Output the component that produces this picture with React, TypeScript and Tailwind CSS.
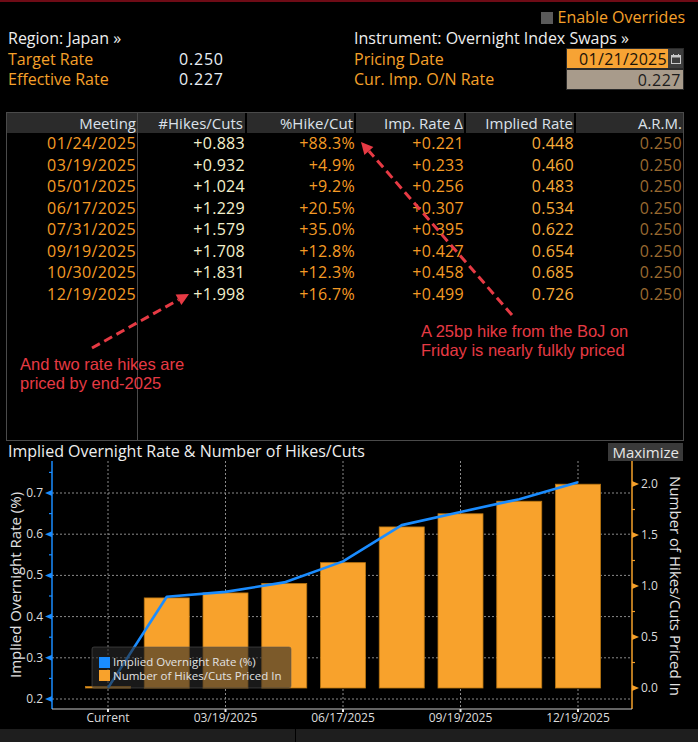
import React from 'react';

const rows = [
  { date: '01/24/2025', hikes: '+0.883', pct: '+88.3%', delta: '+0.221', implied: '0.448', arm: '0.250' },
  { date: '03/19/2025', hikes: '+0.932', pct: '+4.9%', delta: '+0.233', implied: '0.460', arm: '0.250' },
  { date: '05/01/2025', hikes: '+1.024', pct: '+9.2%', delta: '+0.256', implied: '0.483', arm: '0.250' },
  { date: '06/17/2025', hikes: '+1.229', pct: '+20.5%', delta: '+0.307', implied: '0.534', arm: '0.250' },
  { date: '07/31/2025', hikes: '+1.579', pct: '+35.0%', delta: '+0.395', implied: '0.622', arm: '0.250' },
  { date: '09/19/2025', hikes: '+1.708', pct: '+12.8%', delta: '+0.427', implied: '0.654', arm: '0.250' },
  { date: '10/30/2025', hikes: '+1.831', pct: '+12.3%', delta: '+0.458', implied: '0.685', arm: '0.250' },
  { date: '12/19/2025', hikes: '+1.998', pct: '+16.7%', delta: '+0.499', implied: '0.726', arm: '0.250' },
];

const hikes = [0, 0.883, 0.932, 1.024, 1.229, 1.579, 1.708, 1.831, 1.998];
const rates = [0.227, 0.448, 0.46, 0.483, 0.534, 0.622, 0.654, 0.685, 0.726];

const xs = (i: number) => 108 + i * 58.75;
const yL = (v: number) => 238 - (v - 0.2) * 412;
const yR = (n: number) => 227 - n * 102;

const Chart: React.FC = () => {
  const leftMajor = [0.2, 0.3, 0.4, 0.5, 0.6, 0.7];
  const leftMinor = [0.25, 0.35, 0.45, 0.55, 0.65, 0.75];
  const rightMajor = [0, 0.5, 1, 1.5, 2];
  const rightMinor = [0.25, 0.75, 1.25, 1.75];
  const xLabels = [
    { i: 0, t: 'Current' },
    { i: 2, t: '03/19/2025' },
    { i: 4, t: '06/17/2025' },
    { i: 6, t: '09/19/2025' },
    { i: 8, t: '12/19/2025' },
  ];
  const line = rates.map((r, i) => `${xs(i)},${yL(r)}`).join(' ');

  return (
    <svg width={698} height={268} viewBox="0 0 698 268" className="block">
      {/* grid */}
      {leftMajor.map((v) => (
        <line key={v} x1={52} x2={632} y1={yL(v)} y2={yL(v)} stroke="#8a8a8a" strokeWidth={1} strokeDasharray="2 2" />
      ))}
      {xLabels.map((l) => (
        <line key={l.t} x1={xs(l.i)} x2={xs(l.i)} y1={0} y2={248} stroke="#8a8a8a" strokeWidth={1} strokeDasharray="2 2" />
      ))}

      {/* bars */}
      {hikes.map((n, i) => {
        const top = n === 0 ? 225.5 : yR(n);
        return (
          <rect
            key={i}
            x={xs(i) - 22.5}
            y={top}
            width={45}
            height={227 - top}
            fill="#f8a22c"
            stroke="#b97511"
            strokeWidth={0.8}
          />
        );
      })}

      {/* rate line */}
      <polyline points={line} fill="none" stroke="#1a8cff" strokeWidth={2.6} strokeLinejoin="round" />

      {/* legend */}
      <rect x={92} y={186} width={199} height={41} rx={2} fill="rgba(42,42,42,0.6)" stroke="rgba(90,90,90,0.55)" />
      <rect x={99} y={196} width={11} height={11} fill="#1a8cff" />
      <rect x={99} y={209} width={11} height={11} fill="#f8a22c" />
      <text x={113} y={205} fontSize={11.5} fill="#e2e2e2">Implied Overnight Rate (%)</text>
      <text x={113} y={219} fontSize={11.5} fill="#e2e2e2">Number of Hikes/Cuts Priced In</text>

      {/* left axis */}
      <line x1={52} x2={52} y1={0} y2={248} stroke="#1a8cff" strokeWidth={1.5} />
      {leftMajor.map((v) => (
        <g key={v}>
          <polygon points={`${45},${yL(v)} ${52},${yL(v) - 3} ${52},${yL(v) + 3}`} fill="#1a8cff" />
          <text x={43} y={yL(v) + 4} fontSize={12} fill="#dcdcdc" textAnchor="end">
            {v.toFixed(1)}
          </text>
        </g>
      ))}
      {leftMinor.map((v) => (
        <line key={v} x1={49} x2={52} y1={yL(v)} y2={yL(v)} stroke="#1a8cff" strokeWidth={1.2} />
      ))}

      {/* right axis */}
      <line x1={632} x2={632} y1={0} y2={248} stroke="#f5a02a" strokeWidth={1.5} />
      {rightMajor.map((n) => (
        <g key={n}>
          <polygon points={`${639},${yR(n)} ${632},${yR(n) - 3} ${632},${yR(n) + 3}`} fill="#f5a02a" />
          <text x={641} y={yR(n) + 4} fontSize={12} fill="#dcdcdc">
            {n.toFixed(1)}
          </text>
        </g>
      ))}
      {rightMinor.map((n) => (
        <line key={n} x1={632} x2={635} y1={yR(n)} y2={yR(n)} stroke="#f5a02a" strokeWidth={1.2} />
      ))}

      {/* x axis */}
      <line x1={52} x2={632} y1={248} y2={248} stroke="#c8c8c8" strokeWidth={1.2} />
      {xLabels.map((l) => (
        <g key={l.t}>
          <rect x={xs(l.i) - 1} y={248} width={2} height={3} fill="#e8e8e8" />
          <text x={xs(l.i)} y={261} fontSize={12} fill="#dcdcdc" textAnchor="middle">
            {l.t}
          </text>
        </g>
      ))}

      {/* axis titles */}
      <text x={17} y={124} fontSize={15} fill="#e2e2e2" textAnchor="middle" dominantBaseline="middle" transform="rotate(-90 17 124)">
        Implied Overnight Rate (%)
      </text>
      <text x={674} y={125} fontSize={15} fill="#e2e2e2" textAnchor="middle" dominantBaseline="middle" transform="rotate(90 674 125)">
        Number of Hikes/Cuts Priced In
      </text>
    </svg>
  );
};

const Arrows: React.FC = () => (
  <svg width={698} height={742} className="pointer-events-none absolute left-0 top-0">
    <line x1={512} y1={315} x2={368.9} y2={151} stroke="#e63a44" strokeWidth={3} strokeDasharray="9 5" />
    <polygon points="361,142 373.4,147.1 364.4,155" fill="#e63a44" />
    <line x1={92} y1={348} x2={178.5} y2={299.8} stroke="#e63a44" strokeWidth={3} strokeDasharray="9 5" />
    <polygon points="189,294 181.4,305 175.6,294.6" fill="#e63a44" />
  </svg>
);

const App: React.FC = () => {
  return (
    <div className="relative h-[742px] w-[698px] overflow-hidden bg-black font-['Open_Sans',sans-serif] text-[16px] text-[#eeeeee]">
      <div className="h-[2px] bg-[#6e0b16]" />

      {/* overrides */}
      <div className="flex h-[26px] items-start justify-end pr-[13px] pt-[5px] leading-[20px]">
        <span className="mr-[5px] mt-[5px] h-[12px] w-[12px] bg-[#5a5a5a]" />
        <span className="text-[#f5a02a]">Enable Overrides</span>
      </div>

      {/* header fields */}
      <div className="flex leading-[20.5px]">
        <div className="w-[346px] pl-[8px]">
          <div className="h-[20.5px]">Region: Japan »</div>
          <div className="flex h-[20.5px]">
            <span className="w-[171px] text-[#f5a02a]">Target Rate</span>
            <span className="tracking-[0.8px] text-[#e8eef5]">0.250</span>
          </div>
          <div className="flex h-[20.5px]">
            <span className="w-[171px] text-[#f5a02a]">Effective Rate</span>
            <span className="tracking-[0.8px] text-[#e8eef5]">0.227</span>
          </div>
        </div>
        <div className="flex-1 pl-[8px] pr-[14px]">
          <div className="h-[20.5px]">Instrument: Overnight Index Swaps »</div>
          <div className="flex h-[20.5px] items-center">
            <span className="flex-1 text-[#f5a02a]">Pricing Date</span>
            <div className="flex h-[21px] w-[118px] border border-[#2a2a2a]">
              <span className="flex-1 bg-[#f7a334] pr-[1px] text-right tracking-[0.3px] text-[#1a1208]">01/21/2025</span>
              <span className="flex w-[15px] items-center justify-center bg-[#3d3d3d]">
                <svg width={10} height={10} viewBox="0 0 10 10">
                  <rect x={0.5} y={1.5} width={9} height={8} fill="none" stroke="#c8c8c8" />
                  <rect x={0.5} y={1.5} width={9} height={2} fill="#c8c8c8" />
                  <rect x={2} y={0} width={1} height={2} fill="#c8c8c8" />
                  <rect x={7} y={0} width={1} height={2} fill="#c8c8c8" />
                </svg>
              </span>
            </div>
          </div>
          <div className="flex h-[20.5px] items-center">
            <span className="flex-1 text-[#f5a02a]">Cur. Imp. O/N Rate</span>
            <span className="h-[21px] w-[118px] border border-[#2a2a2a] bg-[#a89b8b] pr-[2px] text-right tracking-[0.5px] text-[#1c1c1c]">
              0.227
            </span>
          </div>
        </div>
      </div>

      {/* table */}
      <div className="ml-[6px] mt-[22.5px] flex h-[329px] w-[678px] border border-[#4a4a4a]">
        <div className="w-[131px] border-r border-[#4a4a4a]">
          <div className="h-[20px] bg-[#2b2b2b] pr-[1px] text-right text-[15px] leading-[20px] text-[#dce2ea]">Meeting</div>
          {rows.map((r) => (
            <div key={r.date} className="h-[21.5px] pr-[1px] text-right leading-[21.5px] tracking-[0.4px] text-[#f59b25]">
              {r.date}
            </div>
          ))}
        </div>
        <div className="flex-1">
          <div className="grid h-[20px] grid-cols-[109px_109px_110px_110px_107px] text-right text-[15px] leading-[20px] text-[#dce2ea]">
            <div className="border-r-2 border-black bg-[#2b2b2b] pr-[2px]">#Hikes/Cuts</div>
            <div className="border-r-2 border-black bg-[#2b2b2b] pr-[1px]">%Hike/Cut</div>
            <div className="border-r-2 border-black bg-[#2b2b2b] pr-[1px]">Imp. Rate Δ</div>
            <div className="border-r-2 border-black bg-[#2b2b2b] pr-[1px]">Implied Rate</div>
            <div className="bg-[#2b2b2b] pr-[1px]">A.R.M.</div>
          </div>
          {rows.map((r) => (
            <div key={r.date} className="grid h-[21.5px] grid-cols-[109px_109px_110px_110px_107px] text-right leading-[21.5px] tracking-[0.3px]">
              <div className="pr-[2px] text-[#f4f1cc]">{r.hikes}</div>
              <div className="pr-[1px] text-[#f59b25]">{r.pct}</div>
              <div className="pr-[2px] text-[#f59b25]">{r.delta}</div>
              <div className="pr-[2px] text-[#f8ad3a]">{r.implied}</div>
              <div className="pr-[1px] text-[#9a6a30]">{r.arm}</div>
            </div>
          ))}
        </div>
      </div>

      {/* chart header */}
      <div className="flex h-[20px] items-end justify-between pl-[8px] pr-[15px]">
        <span className="leading-[20px] text-[#eeeeee]">Implied Overnight Rate &amp; Number of Hikes/Cuts</span>
        <span className="h-[18px] bg-[#3a3a3a] px-[4px] text-[15px] leading-[18px] text-[#e6e6e6]">Maximize</span>
      </div>

      <Chart />

      <div className="flex h-[13px] bg-[#1e1e1e]">
        <div className="w-[296px] border-r border-black" />
        <div className="flex-1" />
      </div>

      {/* annotations */}
      <div className="absolute left-[20px] top-[355px] font-['Liberation_Sans',Arial,sans-serif] text-[16.5px] leading-[19px] text-[#e63a44]">
        And two rate hikes are
        <br />
        priced by end-2025
      </div>
      <div className="absolute left-[421px] top-[322px] font-['Liberation_Sans',Arial,sans-serif] text-[16.5px] leading-[19px] text-[#e63a44]">
        A 25bp hike from the BoJ on
        <br />
        Friday is nearly fulkly priced
      </div>
      <Arrows />
    </div>
  );
};

export default App;
